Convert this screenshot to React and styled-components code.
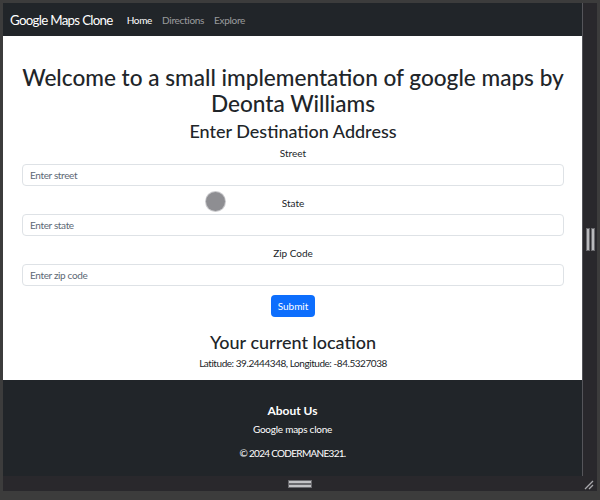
import React from "react";
import styled, { createGlobalStyle } from "styled-components";

const Global = createGlobalStyle`
  html, body { margin: 0; padding: 0; }
  body { width: 600px; height: 500px; overflow: hidden; background: #3c3c3c; font-family: Lato, "Noto Sans", sans-serif; }
  * { box-sizing: border-box; }
`;

const Frame = styled.div`
  width: 600px;
  height: 500px;
  padding: 3px 3px 9px 3px;
  background: #3c3c3c;
`;

const Win = styled.div`
  display: grid;
  grid-template-columns: 580px 14px;
  grid-template-rows: 473px 15px;
  height: 100%;
  background: #29282c;
`;

const Viewport = styled.div`
  position: relative;
  display: flex;
  flex-direction: column;
  background: #fff;
  overflow: hidden;
  border-right: 1px solid #55555a;
`;

const SidePanel = styled.div`
  display: flex;
  align-items: center;
  justify-content: center;
  gap: 3px;
  background: #29282c;
`;

const VBar = styled.span`
  width: 2px;
  height: 21px;
  background: #b9b9bc;
  outline: 1px solid #6a6a6e;
`;

const BottomBar = styled.div`
  grid-column: 1 / 3;
  position: relative;
  display: flex;
  flex-direction: column;
  align-items: center;
  justify-content: center;
  gap: 2px;
  background: #29282c;
`;

const HBar = styled.span`
  width: 22px;
  height: 2px;
  background: #c3c3c6;
  outline: 1px solid #6a6a6e;
`;

const Grip = styled.svg`
  position: absolute;
  right: 3px;
  bottom: 1px;
`;

const Navbar = styled.nav`
  height: 33px;
  flex: none;
  display: flex;
  align-items: center;
  padding: 0 7px;
  background: #212529;
`;

const Brand = styled.span`
  font-size: 13.3px;
  letter-spacing: -0.7px;
  color: #fff;
  margin-right: 14px;
  white-space: nowrap;
`;

const NavLink = styled.span`
  font-size: 10px;
  letter-spacing: -0.3px;
  color: ${(p) => (p.$active ? "#fff" : "rgba(255,255,255,0.55)")};
  margin-right: 10px;
`;

const Main = styled.main`
  flex: none;
  height: 344px;
  padding: 29px 18px 0 19px;
  text-align: center;
  color: #212529;
`;

const Title = styled.h1`
  margin: 0;
  font-size: 22.6px;
  line-height: 26px;
  font-weight: 500;
`;

const SubTitle = styled.h2`
  margin: 3px 0 0;
  font-size: 18px;
  line-height: 22px;
  font-weight: 500;
`;

const Field = styled.div`
  display: flex;
  flex-direction: column;
  align-items: stretch;
  margin-top: ${(p) => p.$mt || 0}px;
`;

const Label = styled.label`
  font-size: 10px;
  line-height: 14px;
  margin-bottom: 4px;
`;

const Input = styled.input`
  height: 22px;
  width: 100%;
  border: 1px solid #dee2e6;
  border-radius: 4px;
  padding: 0 7px;
  font-family: inherit;
  font-size: 10px;
  letter-spacing: -0.35px;
  color: #212529;
  background: #fff;
  &::placeholder { color: #5d6875; }
`;

const Submit = styled.button`
  margin-top: 9px;
  height: 22px;
  padding: 0 7px;
  border: none;
  border-radius: 4px;
  background: #0d6efd;
  color: #fff;
  font-family: inherit;
  font-size: 10px;
`;

const Location = styled.h2`
  margin: 12px 0 0;
  font-size: 18px;
  line-height: 26px;
  font-weight: 500;
`;

const Coords = styled.p`
  margin: 0;
  font-size: 10px;
  letter-spacing: -0.45px;
  line-height: 16px;
`;

const Footer = styled.footer`
  flex: 1;
  background: #212529;
  color: #fff;
  text-align: center;
  padding-top: 23px;
`;

const FooterTitle = styled.h5`
  margin: 0;
  font-size: 12px;
  line-height: 16px;
  font-weight: 700;
`;

const FooterText = styled.p`
  margin: ${(p) => p.$mt}px 0 0;
  font-size: 10px;
  letter-spacing: ${(p) => p.$ls || 0}px;
  line-height: 14px;
`;

const Cursor = styled.span`
  position: absolute;
  left: 203px;
  top: 189px;
  width: 19px;
  height: 19px;
  border-radius: 50%;
  background: #8e8e92;
  box-shadow: 0 0 0 1px #c9c9cc;
`;

export default function App() {
  return (
    <>
      <Global />
      <Frame>
        <Win>
          <Viewport>
            <Navbar>
              <Brand>Google Maps Clone</Brand>
              <NavLink $active>Home</NavLink>
              <NavLink>Directions</NavLink>
              <NavLink>Explore</NavLink>
            </Navbar>
            <Main>
              <Title>Welcome to a small implementation of google maps by Deonta Williams</Title>
              <SubTitle>Enter Destination Address</SubTitle>
              <Field $mt={4}>
                <Label>Street</Label>
                <Input placeholder="Enter street" />
              </Field>
              <Field $mt={10}>
                <Label>State</Label>
                <Input placeholder="Enter state" />
              </Field>
              <Field $mt={10}>
                <Label>Zip Code</Label>
                <Input placeholder="Enter zip code" />
              </Field>
              <Submit>Submit</Submit>
              <Location>Your current location</Location>
              <Coords>Latitude: 39.2444348, Longitude: -84.5327038</Coords>
            </Main>
            <Footer>
              <FooterTitle>About Us</FooterTitle>
              <FooterText $mt={3} $ls={-0.25}>Google maps clone</FooterText>
              <FooterText $mt={10} $ls={-0.7}>© 2024 CODERMANE321.</FooterText>
            </Footer>
            <Cursor />
          </Viewport>
          <SidePanel>
            <VBar />
            <VBar />
          </SidePanel>
          <BottomBar>
            <HBar />
            <HBar />
            <Grip width="10" height="10" viewBox="0 0 10 10">
              <path d="M9 1 L1 9 M9 5 L5 9" stroke="#a9a9ad" strokeWidth="1.3" />
            </Grip>
          </BottomBar>
        </Win>
      </Frame>
    </>
  );
}
